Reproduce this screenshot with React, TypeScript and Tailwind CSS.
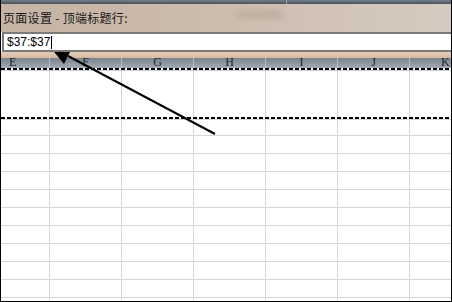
import React from "react";

const cols = ["E", "F", "G", "H", "I", "J", "K"];
const colW = ["w-[49px]", "w-[72px]", "w-[72px]", "w-[72px]", "w-[72px]", "w-[72px]", "flex-1"];

function Row({ h, last }: { h: string; last?: boolean }) {
  return (
    <div className={`flex shrink-0 ${h} ${last ? "" : "border-b border-[#d2d6de]"}`}>
      {cols.map((c, i) => (
        <div key={c} className={`${colW[i]} ${i < 6 ? "border-r border-[#d2d6de]" : ""}`} />
      ))}
    </div>
  );
}

function Dashed({ under }: { under: string }) {
  return (
    <div className="h-[3px] shrink-0 flex flex-col">
      <div className="h-[2px] bg-[repeating-linear-gradient(90deg,#000_0_4px,transparent_4px_6px)]" />
      <div className={`h-[1px] ${under}`} />
    </div>
  );
}

export default function App() {
  const rows = Array.from({ length: 9 });
  return (
    <div className="relative w-[452px] h-[302px] overflow-hidden bg-white border-l border-r border-b border-black flex flex-col font-['Liberation_Sans',sans-serif]">
      {/* top dark strip */}
      <div className="h-[4px] shrink-0 flex bg-gradient-to-b from-[#75808a] to-[#46515b]">
        <div className="w-[286px] border-r border-[#9aa4ad]" />
        <div className="flex-1" />
      </div>
      {/* title bar */}
      <div className="relative h-[28px] shrink-0 flex items-center pl-[2px] bg-gradient-to-r from-[#c5b3a3] via-[#cdbdaf] to-[#d6cbc0]">
        <div className="absolute left-[236px] top-[7px] w-[46px] h-[7px] rounded-full bg-[#bcab9d] blur-[3px]" />
        <span className="relative text-[12px] leading-none text-[#161616] tracking-[0.3px] font-['Noto_Sans_CJK_SC',sans-serif]">
          页面设置 - 顶端标题行:
        </span>
      </div>
      {/* input */}
      <div className="relative z-10 h-[20px] shrink-0 ml-[1px] border-t-2 border-b-2 border-l-2 border-[#7c7a78] bg-white flex items-center pl-[3px]">
        <span className="text-[12px] leading-none text-black">$37:$37</span>
        <span className="w-[1px] h-[13px] bg-black ml-[1px]" />
      </div>
      {/* tan strip below input */}
      <div className="h-[6px] shrink-0 bg-gradient-to-b from-[#e4cdb9] to-[#d7b8a0]" />
      {/* column header */}
      <div className="relative h-[10px] shrink-0 flex overflow-hidden bg-gradient-to-b from-[#78838d] to-[#a3abb3]">
        {cols.map((c, i) => (
          <div
            key={c}
            className={`${colW[i]} ${i < 6 ? "border-r border-[#b7bec6]" : ""} flex ${i === 0 ? "justify-start pl-[8px]" : i === 6 ? "justify-start pl-[31px]" : "justify-center"} items-start`}
          >
            <span className="mt-[-3px] text-[12px] leading-[14px] text-[#1c242c] font-['Liberation_Serif',serif]">
              {c}
            </span>
          </div>
        ))}
      </div>
      <Dashed under="bg-[#c8d0da]" />
      <Row h="h-[46px]" last />
      <Dashed under="bg-[#d2d6de]" />
      <Row h="h-[16px]" />
      {rows.map((_, r) => (
        <Row key={r} h="h-[18px]" />
      ))}
      <Row h="flex-1" last />
      {/* arrow */}
      <svg className="absolute left-0 top-0 pointer-events-none" width="452" height="302" viewBox="0 0 452 302">
        <line x1="67" y1="56" x2="214" y2="134" stroke="#000" strokeWidth="2" />
        <polygon points="49,47 63,64 71,48" fill="#000" />
      </svg>
    </div>
  );
}
